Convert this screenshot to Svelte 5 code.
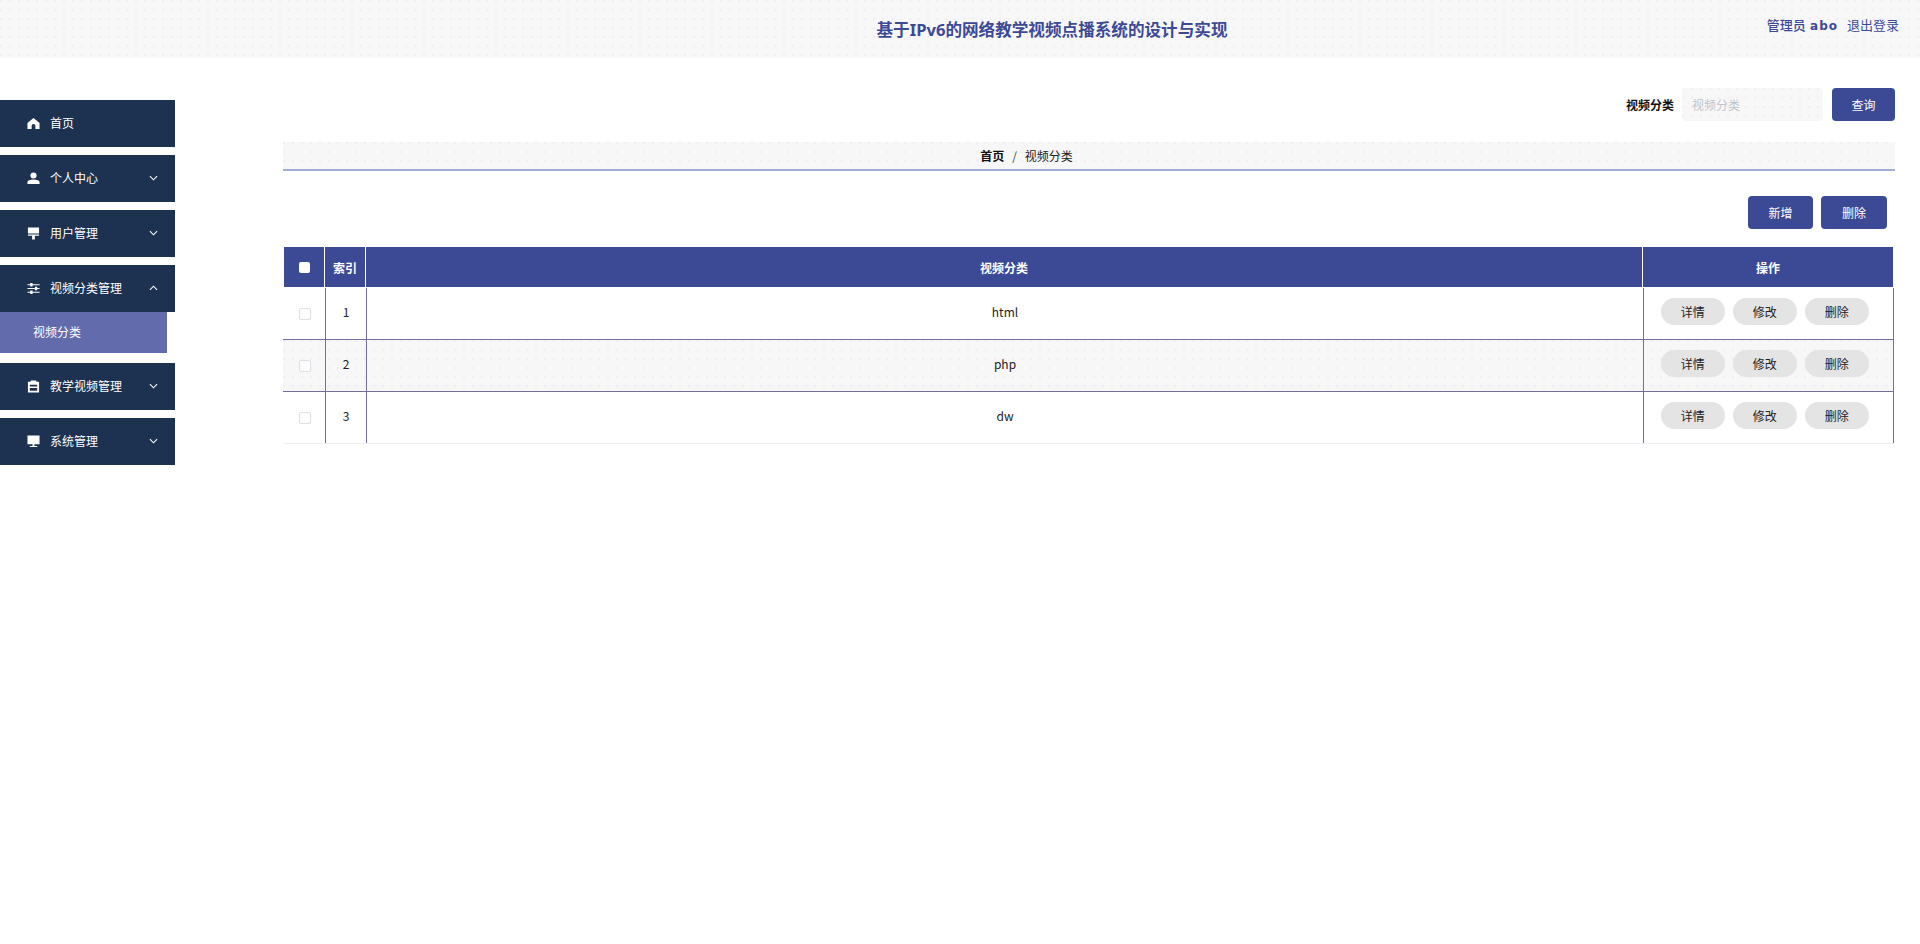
<script>
  const menu = [
    { label: '首页', icon: 'home' },
    { label: '个人中心', icon: 'user', arrow: 'down' },
    { label: '用户管理', icon: 'brush', arrow: 'down' },
    { label: '视频分类管理', icon: 'sliders', arrow: 'up', children: ['视频分类'] },
    { label: '教学视频管理', icon: 'clip', arrow: 'down' },
    { label: '系统管理', icon: 'screen', arrow: 'down' }
  ];
  const rows = [
    { id: 1, name: 'html' },
    { id: 2, name: 'php' },
    { id: 3, name: 'dw' }
  ];
</script>

<div class="page">
  <header class="topbar">
    <h1>基于IPv6的网络教学视频点播系统的设计与实现</h1>
    <div class="user">
      <span class="role">管理员 <b>abo</b></span>
      <span>退出登录</span>
    </div>
  </header>

  <div class="body">
    <aside class="side">
      {#each menu as item}
        <div class="group">
          <div class="item">
            <svg class="ico" viewBox="0 0 14 14" fill="#fff">
              {#if item.icon === 'home'}
                <path d="M7 1 L13.500 6.500 V13 H9 V9.500 a2 2 0 0 0 -4 0 V13 H0.500 V6.500 Z" />
              {:else if item.icon === 'user'}
                <circle cx="7" cy="3.800" r="3.300" />
                <path d="M0.500 13 V11 C0.500 9 3 8 7 8 S13.500 9 13.500 11 V13 Z" />
              {:else if item.icon === 'brush'}
                <path d="M1 0.500 H13 V7 H1 Z M1 8 H13 V9.500 H8.500 V13.500 H5.500 V9.500 H1 Z" />
              {:else if item.icon === 'sliders'}
                <path d="M0.500 2.300 H13.500 V3.500 H0.500 Z M0.500 6.400 H13.500 V7.600 H0.500 Z M0.500 10.500 H13.500 V11.700 H0.500 Z" />
                <path d="M3.500 1 H6 V4.800 H3.500 Z M8.500 5.100 H11 V8.900 H8.500 Z M3.500 9.200 H6 V13 H3.500 Z" />
              {:else if item.icon === 'clip'}
                <path fill-rule="evenodd" d="M1 1.800 H4 V0.500 H10 V1.800 H13 V13.500 H1 Z M3 5 V7 H11 V5 Z M3 8.500 V11.500 H11 V8.500 Z" />
              {:else}
                <path d="M0.500 0.500 H13.500 V10 H8 V11.800 H11 V13 H3 V11.800 H6 V10 H0.500 Z" />
              {/if}
            </svg>
            <span class="label">{item.label}</span>
            {#if item.arrow}
              <svg class="arrow" class:up={item.arrow === 'up'} viewBox="0 0 10 6" fill="none" stroke="#fff" stroke-width="1.200">
                <path d="M1 1 L5 5 L9 1" />
              </svg>
            {/if}
          </div>
          {#if item.children}
            {#each item.children as child}
              <div class="sub">{child}</div>
            {/each}
          {/if}
        </div>
      {/each}
    </aside>

    <main class="main">
      <div class="search">
        <span class="search-label">视频分类</span>
        <input class="search-input" placeholder="视频分类" />
        <button class="btn">查询</button>
      </div>

      <div class="crumb">
        <b>首页</b><span class="sep">/</span><span>视频分类</span>
      </div>

      <div class="actions">
        <button class="btn">新增</button>
        <button class="btn wide">删除</button>
      </div>

      <div class="table">
        <div class="thead">
          <div class="th"><span class="check-head"></span></div>
          <div class="th">索引</div>
          <div class="th">视频分类</div>
          <div class="th last">操作</div>
        </div>
        {#each rows as row, i}
          <div class="tr" class:odd={i === 1} class:end={i === rows.length - 1}>
            <div class="td first"><span class="check"></span></div>
            <div class="td text">{row.id}</div>
            <div class="td text">{row.name}</div>
            <div class="td ops">
              <button class="pill">详情</button>
              <button class="pill">修改</button>
              <button class="pill">删除</button>
            </div>
          </div>
        {/each}
      </div>
    </main>
  </div>
</div>

<style>
  :global(body) {
    background: #fff;
    font-family: "Liberation Sans", "Noto Sans CJK SC", sans-serif;
  }
  .page { min-height: 944px; }

  /* dotted paper tint shared by bars and even rows */
  .topbar, .crumb, .tr.odd, .search-input {
    background-color: #f8f7f8;
    background-image: radial-gradient(circle at 1px 1px, #f1eef2 0.8px, transparent 1px);
    background-size: 9px 9px;
  }

  /* top bar */
  .topbar {
    height: 58px;
    position: relative;
    display: flex;
    align-items: center;
    justify-content: center;
    padding-left: 184px;
    box-sizing: border-box;
  }
  .topbar h1 {
    margin: 0;
    font-size: 16.6px;
    font-weight: 700;
    color: #3c4a96;
    font-family: "Noto Sans", "Noto Sans CJK SC", sans-serif;
  }
  .user {
    position: absolute;
    top: 16px;
    right: 21px;
    display: flex;
    gap: 9px;
    font-size: 13px;
    line-height: 18px;
    color: #3c4a96;
    font-family: "Noto Sans", "Noto Sans CJK SC", sans-serif;
  }
  .role { font-weight: 500; }
  .role b { font: 700 12px "DejaVu Sans", sans-serif; letter-spacing: 1px; margin-left: 1px; }

  .body { display: flex; align-items: flex-start; }

  /* side menu */
  .side {
    width: 283px;
    flex: none;
    padding-top: 42px;
    box-sizing: border-box;
    display: flex;
    flex-direction: column;
    gap: 8px;
  }
  .item {
    width: 175px;
    height: 47px;
    background: #1d3150;
    color: #fff;
    font-size: 12px;
    display: flex;
    align-items: center;
    padding-left: 27px;
    box-sizing: border-box;
    position: relative;
  }
  .ico { width: 13px; height: 13px; flex: none; }
  .label { margin-left: 10px; position: relative; top: -1px; }
  .arrow {
    position: absolute;
    right: 17px;
    top: 20px;
    width: 9px;
    height: 6px;
  }
  .arrow.up { transform: rotate(180deg); }
  .sub {
    width: 167px;
    height: 41px;
    margin-bottom: 2px;
    background: #626bab;
    color: #fff;
    font-size: 12px;
    line-height: 43px;
    padding-left: 33px;
    box-sizing: border-box;
  }

  /* content */
  .main { width: 1612px; flex: none; font-family: "Noto Sans CJK SC", sans-serif; }
  .search {
    display: flex;
    justify-content: flex-end;
    align-items: center;
    margin-top: 30px;
    height: 33px;
  }
  .search-label { font-size: 12px; font-weight: 700; color: #111; margin-right: 8px; }
  .search-input {
    width: 141px;
    height: 33px;
    box-sizing: border-box;
    border: 0;
    border-radius: 4px;
    padding: 0 10px;
    font: 12px "Noto Sans CJK SC", sans-serif;
    margin-right: 9px;
  }
  .search-input::placeholder { color: #c0c4cc; }
  .btn {
    width: 63px;
    height: 33px;
    border: 0;
    border-radius: 4px;
    background: #3c4a96;
    color: #fff;
    font: 12px "Noto Sans CJK SC", sans-serif;
    padding: 0;
  }
  .crumb {
    margin-top: 21px;
    height: 29px;
    box-sizing: border-box;
    border-bottom: 2px solid #a3aed6;
    display: flex;
    justify-content: center;
    align-items: center;
    font-size: 12px;
    color: #222;
    padding-right: 125px;
  }
  .crumb b { color: #111; }
  .sep { margin: 0 8px; color: #444; }
  .actions {
    display: flex;
    justify-content: flex-end;
    gap: 8px;
    margin-top: 25px;
    padding-right: 8px;
  }
  .actions .btn { width: 65px; }
  .actions .btn.wide { width: 66px; }

  /* table: body column rules sit 1px right of the header ones */
  .table {
    margin-top: 17px;
    width: 1612px;
    font-size: 12px;
  }
  .thead, .tr { display: grid; }
  .thead {
    grid-template-columns: 41px 41px 1277px 250px;
    padding: 1px 0 1px 1px;
    height: 42px;
    box-sizing: border-box;
    width: 1611px;
  }
  .th {
    background: #3c4a96;
    color: #fff;
    font-weight: 700;
    display: flex;
    align-items: center;
    justify-content: center;
    border-right: 1px solid #fff;
    height: 40px;
  }
  .th.last { border-right: 0; }
  .tr {
    grid-template-columns: 43px 41px 1277px 250px;
    height: 52px;
    box-sizing: border-box;
    border-bottom: 1px solid #726f9f;
    width: 1611px;
  }
  .tr.end { border-bottom: 1px solid #ebeef5; }
  .td {
    display: flex;
    align-items: center;
    justify-content: center;
    color: #222;
    border-right: 1px solid #726f9f;
    font-size: 12px;
  }
  .td.first { padding-left: 1px; }
  .td.text { padding: 0 0 5px 0; }
  .check {
    width: 12px;
    height: 12px;
    box-sizing: border-box;
    border: 1px solid #dcdfe6;
    border-radius: 2px;
    background: #fff;
  }
  .check-head {
    width: 11px;
    height: 11px;
    border-radius: 2px;
    background: #fff;
  }
  .ops { gap: 8.500px; justify-content: flex-start; padding: 0 0 5px 17px; }
  .pill {
    width: 63.500px;
    height: 27px;
    padding: 0;
    border: 0;
    border-radius: 14px;
    background: #e4e4e4;
    color: #222;
    font: 12px "Noto Sans CJK SC", sans-serif;
  }
</style>
